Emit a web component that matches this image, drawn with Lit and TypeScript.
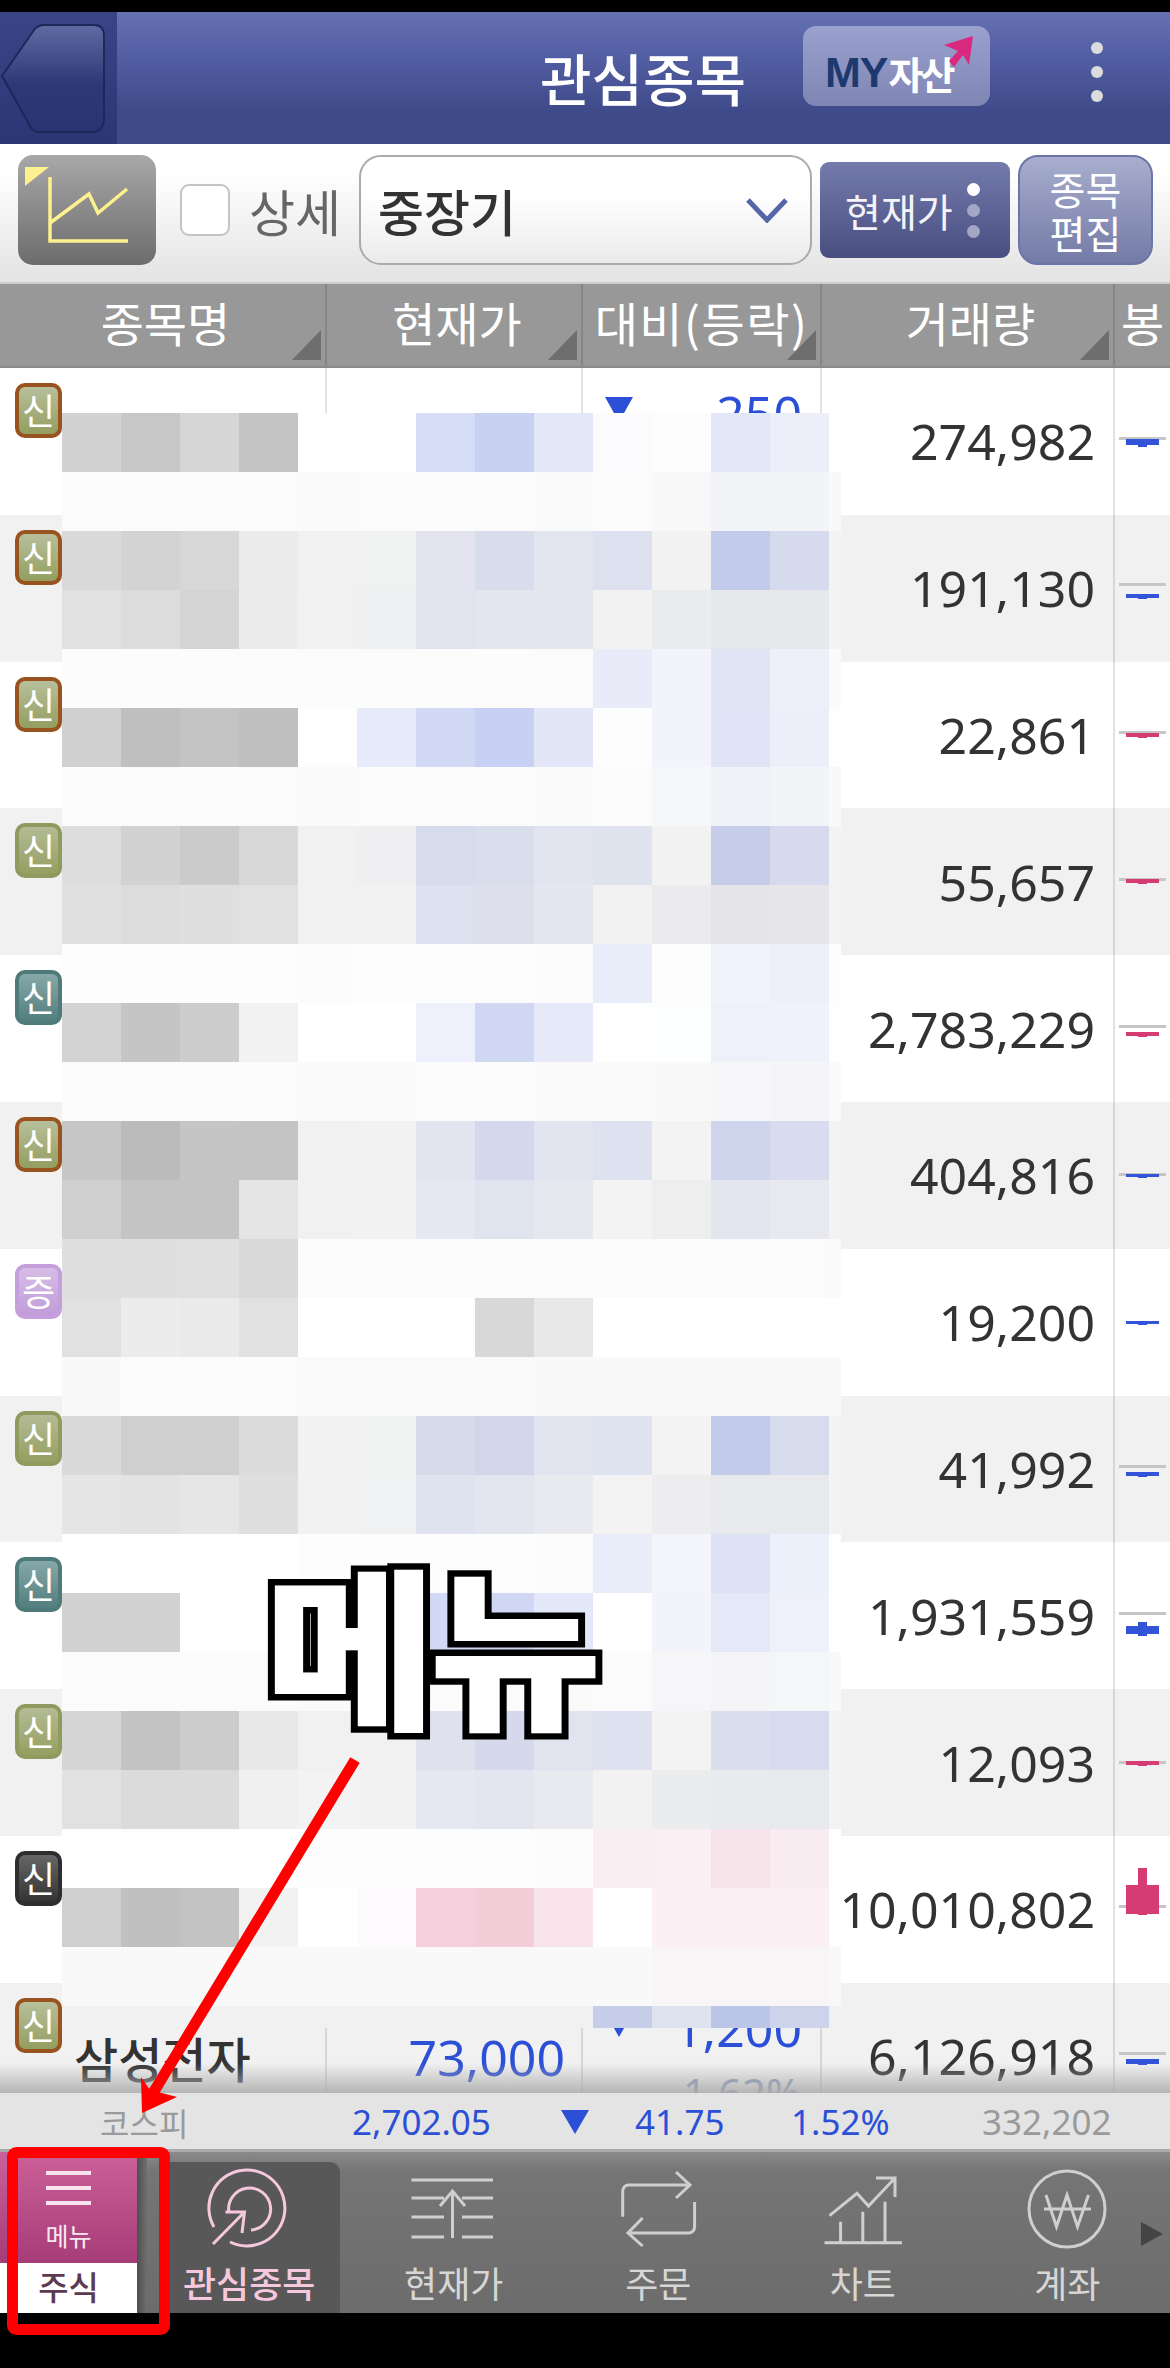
import { LitElement, html, css, svg } from "lit";
import { customElement } from "lit/decorators.js";

const MOSAIC = `d2 c7 d6 c4 ff ff d6ddf6 c9d1f3 e4e7f7 fbfbfe fefdfe e2e8f7 eceef9 ff
fb fb fb fb fa fb fb fb fa fb f8 f2f3f7 f3f4f8 f9
d9 d3 d7 eb f1 f0f2f1 e2e3ef d8ddec e3e6ef dde0ef f2 c2cbe9 d5daec f3
e1 dc d4 ec f1 eff0f2 e2e3ef e3e6ef e4e7ef f2 eaebee e7e8ec e7e8ec f3
fc fc fc fc fb fc fc fc fb e9ebf8 f3f4fb e0e5f6 edf0f9 fa
d0 bf c4 bf fe e8ebfa d2d9f5 c8d0f3 e3e6f7 fdfdfe f3f4fb dfe4f6 eceefa fe
fb fb fb fb fa fb fb fb fa fb f6f7f9 f1f2f7 f3f4f8 f9
dd d2 cb d7 f1 efeff1 d6dcec d8deec e2e4ef dfe3ee f2 c6cde9 d6daec f3
e0 dc df e1 f1 f1 dde0ee dedfec e5e7f0 f2 ebebee e5e5e9 e6e6ea f3
fd fd fd fd fc fd fd fd fc e9edf9 fd f1f3fc edf0f9 fd
d3 c5 cd f2 ff ff eef0fb d0d7f3 e6e9f8 fe fdfefe eef1fa eff2fa fe
fb fb fb fb fa fa fb fb fa fa f9 f7f6f9 f5f5f9 fa
c6 bb c5 c4 f1 f2 e2e4ef d3d8ed e2e4ef dee1ef f3 cfd5ed d9dcee f3
cf c4 c4 e4 f1 f2 e5e8f1 e0e4ef e6e8f0 f3 ee e3e6ee e8e9ee f3
df df e0 d9 fc fc fc fc fb fb fb fb fb fa
e1 ec ea e1 ff ff ff d8 e8 ff ff ff ff ff
f9 fb fb fb fa fa fa fa f9 f9 f9 f9 f9 f8
da cf cf db f2 f1f3f2 d6dbec d1d6eb e2e4ef dfe2ef f3 c2cbe9 d7dcec f3
e5 e3 e6 df f2 eff1f3 dfe3ef e3e6ef e9eaef f3 edecef e8e9ed e8e9ed f3
ff ff ff ff fd fd fd fd fc e9edf9 f4f5fb dde2f5 ecf0fa fe
d2 d2 ff ff ff ff d2d9f5 d0d7f5 e3e8f8 ff f3f4fb e5e8f7 eff1fa ff
fb fb fb fb fa fb fb fb fa fb f6f6f8 f5f5f8 f5f6f8 f9
d5 c3 cc e8 f1 f1 dfe1ee d5d9eb e1e3ee dee1ef f3 dadeed d8dbed f3
e1 db db f0 f3 f2 e5e8f0 e3e6ef e9eaef f2 ebecee e8eaed e8e9ed f3
fe fe fe fe fd fd fd fd fc f9eef2 faf0f4 f6e3ea f9ecf0 fe
cf c0 c3 f2 ff fdfbfd f3d0dc f3ced9 f8e4ea ff fcf0f4 fbeff3 fcf0f4 fe
f9 f9 f9 f9 f9 f9 f9 f9 f9 f9 f7f5f6 f7f5f6 f7f5f6 f8
f2 f2 f2 f2 f1 f2 f2 f2 f1 c5cde9 dfe3f0 bac5e8 ced3ec -`
  .split("\n")
  .map((r) => r.trim().split(" "));

const hex = (v: string) =>
  v === "-" ? "transparent" : v.length === 2 ? `#${v}${v}${v}` : `#${v}`;

type Row = {
  vol: string;
  badge: string;
  label: string;
  gray: number;
  color: string;
  top: number;
  h: number;
};
const BLUE = "#3353d8";
const PINK = "#d63c74";
const ROWS: Row[] = [
  { vol: "274,982", badge: "b-brown", label: "신", gray: 69, color: BLUE, top: 71, h: 6 },
  { vol: "191,130", badge: "b-brown", label: "신", gray: 68, color: BLUE, top: 79, h: 4 },
  { vol: "22,861", badge: "b-brown", label: "신", gray: 69, color: PINK, top: 71, h: 4 },
  { vol: "55,657", badge: "b-green", label: "신", gray: 70, color: PINK, top: 71, h: 4 },
  { vol: "2,783,229", badge: "b-teal", label: "신", gray: 70, color: PINK, top: 77, h: 4 },
  { vol: "404,816", badge: "b-brown", label: "신", gray: 71, color: BLUE, top: 72, h: 3 },
  { vol: "19,200", badge: "b-purple", label: "증", gray: -1, color: BLUE, top: 72, h: 3 },
  { vol: "41,992", badge: "b-green", label: "신", gray: 69, color: BLUE, top: 76, h: 4 },
  { vol: "1,931,559", badge: "b-teal", label: "신", gray: 70, color: BLUE, top: 84, h: 8 },
  { vol: "12,093", badge: "b-green", label: "신", gray: 72, color: PINK, top: 72, h: 4 },
  { vol: "10,010,802", badge: "b-black", label: "신", gray: 69, color: PINK, top: 49, h: 29 },
  { vol: "6,126,918", badge: "b-brown", label: "신", gray: 69, color: BLUE, top: 76, h: 5 },
];

const ICONS: Record<string, unknown> = {
  watch: svg`<path d="M15 62A38 38 0 1 1 31 77"/><path d="M30 48A21 21 0 1 1 52 65"/><path d="M14 79L45.5 47M26.5 47H45.5L43 68"/>`,
  price: svg`<path d="M7.5 15H89M7.5 33H40M58 33H89M7.5 52H40M58 52H89M7.5 72H40M58 72H89M48.5 73V26M36 41L48.5 26L61 41"/>`,
  order: svg`<path d="M14.7 51.7V26a6 6 0 0 1 6-6H82M68 7L82 20L68 33"/><path d="M86.6 37V62a6 6 0 0 1-6 6H20M34.6 53L20 68L34.6 81"/>`,
  chart: svg`<path d="M11.5 77.700H89M27.600 77.700V56.700M49.800 77.700V46.700M72 77.700V36.700M16.500 50.700L44 28.300L55.500 41L82 13M63 13H82V32"/>`,
  account: svg`<circle cx="50" cy="44" r="38"/><path d="M29 30L39.500 61.700L50 30L60.500 61.700L71.500 30M27 44H74"/>`,
};
const TABS = [
  { icon: "watch", label: "관심종목", active: true },
  { icon: "price", label: "현재가", active: false },
  { icon: "order", label: "주문", active: false },
  { icon: "chart", label: "차트", active: false },
  { icon: "account", label: "계좌", active: false },
];

@customElement("app-root")
export class AppRoot extends LitElement {
  static styles = css`
    :host {
      display: block;
      position: relative;
      width: 1170px;
      height: 2368px;
      overflow: hidden;
      background: #000;
      padding-top: 12px;
      box-sizing: border-box;
      font-family: "Noto Sans", "Noto Sans CJK KR", sans-serif;
      color: #333;
    }
    .kr {
      font-family: "Noto Sans CJK KR", "Noto Sans", sans-serif;
    }
    .appbar {
      height: 132px;
      display: flex;
      background: linear-gradient(#6671b2, #525ea2 35%, #3f4a8a 75%, #3f4a88);
    }
    .back {
      width: 117px;
      flex: none;
      display: block;
      background: linear-gradient(#3a4588, #2c3675);
    }
    .title {
      width: 286px;
      margin-left: 383px;
      margin-right: 5px;
      text-align: center;
      color: #fff;
      font-size: 56px;
      line-height: 132px;
      font-weight: 500;
      white-space: nowrap;
      height: 132px;
      transform: translateY(-1px);
    }
    .my {
      position: relative;
      margin-top: 14px;
      margin-left: 12px;
      width: 187px;
      height: 80px;
      flex: none;
      border-radius: 13px;
      background: linear-gradient(#9aa1cf, #7f86b4);
      display: flex;
      align-items: center;
      padding: 13px 0 0 22px;
      box-sizing: border-box;
      font-weight: 700;
    }
    .my b {
      font-family: "Liberation Sans", sans-serif;
      font-size: 43px;
      color: #1d3a70;
      letter-spacing: -1px;
    }
    .my span {
      font-size: 38px;
      color: #fff;
      letter-spacing: -3px;
      margin-left: 1px;
    }
    .my svg {
      position: absolute;
      left: 140px;
      top: 8px;
    }
    .dots {
      display: flex;
      flex-direction: column;
      gap: 12px;
      margin: 30px 0 0 101px;
    }
    .dots i {
      width: 12px;
      height: 12px;
      border-radius: 50%;
      background: #dcdcdc;
      display: block;
    }
    .toolbar {
      height: 140px;
      box-sizing: border-box;
      border-bottom: 2px solid #cdcdcd;
      background: linear-gradient(#fff, #fff 20%, #e3e3e3);
      display: flex;
      padding: 11px 18px 0;
    }
    .chartbtn {
      width: 138px;
      height: 110px;
      border-radius: 15px;
      background: linear-gradient(#a8a8a8, #6c6c6c);
      flex: none;
      display: block;
    }
    .check {
      width: 50px;
      height: 52px;
      box-sizing: border-box;
      border: 2px solid #c4c4c4;
      border-radius: 9px;
      background: #fff;
      margin: 29px 0 0 24px;
      flex: none;
    }
    .lbl {
      font-size: 50px;
      color: #666;
      line-height: 110px;
      margin-left: 19px;
      width: 92px;
      flex: none;
      white-space: nowrap;
    }
    .select {
      width: 453px;
      height: 110px;
      margin-left: 18px;
      flex: none;
      box-sizing: border-box;
      border: 2px solid #ababab;
      border-radius: 22px;
      background: linear-gradient(#fff, #fff 35%, #ebebeb);
      display: flex;
      align-items: center;
      justify-content: space-between;
      padding: 0 22px 0 17px;
      font-size: 50px;
      font-weight: 500;
      color: #333;
    }
    .cur {
      width: 190px;
      height: 96px;
      margin: 7px 0 0 8px;
      flex: none;
      border-radius: 9px;
      background: linear-gradient(#747bad, #484e7f);
      display: flex;
      align-items: center;
      padding-left: 25px;
      box-sizing: border-box;
      color: #f4f4f8;
      font-size: 39px;
      gap: 14px;
      white-space: nowrap;
    }
    .cur div {
      display: flex;
      flex-direction: column;
      gap: 8px;
    }
    .cur i {
      display: block;
      width: 13px;
      height: 13px;
      border-radius: 50%;
      background: #a3a6c4;
    }
    .cur i:first-child {
      background: #fff;
    }
    .edit {
      width: 135px;
      height: 110px;
      margin-left: 8px;
      flex: none;
      box-sizing: border-box;
      border: 2px solid #6c74a8;
      border-radius: 20px;
      background: linear-gradient(#a8aecd, #737aa6);
      color: #fff;
      font-size: 39px;
      line-height: 44px;
      text-align: center;
      padding-top: 9px;
      white-space: nowrap;
    }
    .head,
    .row {
      display: grid;
      grid-template-columns: 325px 256px 239px 293px 57px;
    }
    .head {
      height: 84px;
      box-sizing: border-box;
      background: #989898;
      border-bottom: 2px solid #8a8a8a;
      color: #fff;
      font-size: 47px;
    }
    .head > div {
      position: relative;
      text-align: center;
      line-height: 76px;
      white-space: nowrap;
      border-left: 2px solid #858585;
      box-sizing: border-box;
    }
    .head > div:first-child {
      border-left: none;
    }
    .head .nm {
      padding-left: 6px;
    }
    .head > div.sort::after {
      content: "";
      position: absolute;
      right: 4px;
      bottom: 6px;
      width: 29px;
      height: 30px;
      background: #6e6e6e;
      clip-path: polygon(100% 0, 100% 100%, 0 100%);
    }
    .head .wide {
      letter-spacing: 1.5px;
      padding-left: 0;
    }
    .body {
      height: 1725px;
      overflow: hidden;
      position: relative;
    }
    .row {
      height: 146.8px;
      background: #fff;
      overflow: hidden;
    }
    .row.alt {
      background: #f1f1f1;
    }
    .row > div {
      border-left: 2px solid #e2e2e2;
      box-sizing: border-box;
      position: relative;
    }
    .row.alt > div {
      border-left-color: #d6d6d6;
    }
    .row > div:first-child {
      border-left: none;
    }
    .badge {
      position: absolute;
      left: 15px;
      top: 15px;
      width: 47px;
      height: 55px;
      box-sizing: border-box;
      border-radius: 10px;
      border: 4px solid;
      color: #fff;
      font-size: 36px;
      line-height: 44px;
      text-align: center;
    }
    .b-brown {
      border-color: #98531f;
      background: linear-gradient(#b8bf9c, #939e5f);
    }
    .b-green {
      border-color: #8e9a5e;
      background: linear-gradient(#b4bb96, #949f60);
    }
    .b-teal {
      border-color: #4f7a7a;
      background: linear-gradient(#86a8a8, #527e7e);
    }
    .b-purple {
      border-color: #c49fdc;
      background: linear-gradient(#d6bde6, #c19cda);
    }
    .b-black {
      border-color: #2e2e2e;
      background: linear-gradient(#666, #333);
    }
    .name {
      position: absolute;
      left: 74px;
      top: 43px;
      font-size: 48px;
      font-weight: 500;
      line-height: 62px;
      white-space: nowrap;
    }
    .price {
      position: absolute;
      right: 16px;
      top: 40px;
      font-size: 50px;
      line-height: 68px;
      color: #2b4fd6;
    }
    .chg {
      position: absolute;
      right: 18px;
      top: 11px;
      font-size: 50px;
      line-height: 68px;
      color: #2b4fd6;
    }
    .tri {
      position: absolute;
      left: 22px;
      top: 29px;
      width: 0;
      height: 0;
      border-left: 14px solid transparent;
      border-right: 14px solid transparent;
      border-top: 25px solid #2b4fd6;
    }
    .pct {
      position: absolute;
      right: 19px;
      top: 82px;
      font-size: 42px;
      line-height: 56px;
      color: #8899c2;
    }
    .vol {
      display: flex;
      align-items: center;
      justify-content: flex-end;
      padding-right: 18px;
      font-size: 50px;
      white-space: nowrap;
    }
    .candle {
      display: block;
    }
    .fade {
      position: absolute;
      left: 0;
      right: 0;
      bottom: 0;
      height: 30px;
      background: linear-gradient(rgba(170, 170, 170, 0), rgba(170, 170, 170, 0.85));
    }
    .mosaic {
      position: absolute;
      left: 62px;
      top: 413px;
      display: grid;
      grid-template-columns: repeat(13, 59px) 12px;
      grid-template-rows: repeat(27, 59px) 22px;
    }
    .index {
      height: 59px;
      box-sizing: border-box;
      background: #e4e4e4;
      border-bottom: 3px solid #ababab;
      position: relative;
      font-size: 35px;
      line-height: 58px;
      color: #2b4fd6;
    }
    .index span {
      position: absolute;
      top: 0;
      white-space: nowrap;
    }
    .index .g {
      color: #9a9a9a;
    }
    .index .k {
      font-size: 32px;
    }
    .index .t {
      position: absolute;
      left: 561px;
      top: 17px;
      width: 0;
      height: 0;
      border-left: 14px solid transparent;
      border-right: 14px solid transparent;
      border-top: 24px solid #2b4fd6;
    }
    .nav {
      height: 161px;
      display: flex;
      position: relative;
      background: linear-gradient(#8a8a8a, #757575 12%, #6c6c6c);
      overflow: hidden;
    }
    .menu {
      width: 137px;
      flex: none;
      display: flex;
      flex-direction: column;
      font-size: 25px;
    }
    .menu .top {
      height: 111px;
      background: linear-gradient(#cc6199, #a63c78);
      display: flex;
      flex-direction: column;
      align-items: center;
      color: #f9e8f2;
      padding: 19px 0 0 0;
      box-sizing: border-box;
    }
    .menu .bars {
      width: 45px;
      height: 34px;
      box-sizing: border-box;
      border-top: 4px solid #f9e3ef;
      border-bottom: 4px solid #f9e3ef;
      position: relative;
      margin-bottom: 15px;
    }
    .menu .bars::after {
      content: "";
      position: absolute;
      left: 0;
      right: 0;
      top: 11px;
      height: 4px;
      background: #f9e3ef;
    }
    .menu .top span {
      line-height: 30px;
    }
    .menu .bot {
      flex: 1;
      background: #fff;
      text-align: center;
      font-size: 33px;
      line-height: 47px;
      color: #5c3a52;
      font-weight: 500;
    }
    .shadow {
      width: 10px;
      flex: none;
      background: linear-gradient(90deg, #4f4f4f, #6f6f6f);
    }
    .tab {
      width: 204.5px;
      flex: none;
      box-sizing: border-box;
      padding-top: 13px;
      text-align: center;
      color: #d6d6d6;
      font-size: 36px;
      line-height: 50px;
      position: relative;
    }
    .tab svg {
      display: block;
      margin: 0 auto 4px;
      fill: none;
      stroke: #cfcfcf;
      stroke-width: 3;
    }
    .tab.on {
      color: #f5c8de;
      font-weight: 500;
    }
    .tab.on svg {
      stroke: #f5c8de;
    }
    .tab.on::before {
      content: "";
      position: absolute;
      left: 12px;
      width: 181px;
      top: 10px;
      bottom: 0;
      border-radius: 10px 10px 0 0;
      background: #585858;
    }
    .tab > * {
      position: relative;
    }
    .more {
      position: absolute;
      left: 1141px;
      top: 70px;
      width: 0;
      height: 0;
      border-top: 12px solid transparent;
      border-bottom: 12px solid transparent;
      border-left: 22px solid #444;
    }
    .note {
      position: absolute;
      left: 264px;
      top: 1523px;
      font-size: 188px;
      line-height: 250px;
      font-weight: 900;
      color: #fff;
      -webkit-text-stroke: 14px #000;
      paint-order: stroke fill;
      white-space: nowrap;
      letter-spacing: -8px;
      transform: scaleY(0.92);
      transform-origin: 0 38px;
    }
    .marks {
      position: absolute;
      left: 0;
      top: 0;
      display: block;
    }
  `;

  private candle(r: Row, i: number) {
    const wickTop = i === 10 ? 32 : i === 0 ? 71 : i === 8 ? 80 : r.top;
    const wickEnd = i === 10 ? 79 : i === 0 ? 79 : i === 8 ? 94 : r.top + r.h + 1;
    return html`<svg class="candle" width="55" height="146" viewBox="0 0 55 146">
      ${r.gray >= 0 ? svg`<rect x="4" y=${r.gray} width="47" height="3" fill="#c6c6c6"/>` : ""}
      <rect x="23" y=${wickTop} width="9" height=${wickEnd - wickTop} fill=${r.color} />
      <rect x="11" y=${r.top} width="33" height=${r.h} fill=${r.color} />
    </svg>`;
  }

  render() {
    return html`
      <div class="appbar">
        <svg class="back" width="117" height="132" viewBox="0 0 117 132">
          <defs>
            <linearGradient id="bk" x1="0" y1="0" x2="0" y2="1">
              <stop offset="0" stop-color="#5f6ba2" />
              <stop offset="0.55" stop-color="#2d3877" />
              <stop offset="1" stop-color="#2a3473" />
            </linearGradient>
          </defs>
          <path
            d="M2 64L34 18Q38 13 44 13H94Q104 13 104 24V105Q104 120 92 120H40Q34 120 31 116Z"
            fill="url(#bk)"
            stroke="#1e2759"
            stroke-width="2"
          />
        </svg>
        <div class="title kr">관심종목</div>
        <div class="my kr">
          <b>MY</b><span>자산</span>
          <svg width="36" height="34" viewBox="0 0 36 34">
            <path d="M1 11L30 2L26 31L20 21L11 33L6 27L15 17Z" fill="#d9287f" />
          </svg>
        </div>
        <div class="dots"><i></i><i></i><i></i></div>
      </div>
      <div class="toolbar kr">
        <svg class="chartbtn" width="138" height="110" viewBox="0 0 138 110">
          <path d="M7 12H31L7 31Z" fill="#fdf08e" />
          <path
            d="M32 22V86H110M32 68L71 39L80 58L109 34"
            fill="none"
            stroke="#fdf08e"
            stroke-width="3.500"
          />
        </svg>
        <div class="check"></div>
        <div class="lbl">상세</div>
        <div class="select">
          <span>중장기</span>
          <svg width="42" height="26" viewBox="0 0 42 26">
            <path d="M2 3L21 23L40 3" fill="none" stroke="#5566a8" stroke-width="5" />
          </svg>
        </div>
        <div class="cur">
          <span>현재가</span>
          <div><i></i><i></i><i></i></div>
        </div>
        <div class="edit">종목<br />편집</div>
      </div>
      <div class="head kr">
        <div class="sort nm">종목명</div>
        <div class="sort nm">현재가</div>
        <div class="sort wide">대비(등락)</div>
        <div class="sort nm">거래량</div>
        <div>봉</div>
      </div>
      <div class="body">
        ${ROWS.map(
          (r, i) => html`<div class="row ${i % 2 ? "alt" : ""}">
            <div>
              <span class="badge kr ${r.badge}">${r.label}</span>
              ${i === 11 ? html`<span class="name kr">삼성전자</span>` : ""}
            </div>
            <div>${i === 11 ? html`<span class="price">73,000</span>` : ""}</div>
            <div>
              ${i === 0 || i === 11
                ? html`<i class="tri"></i><span class="chg">${i === 0 ? "250" : "1,200"}</span>`
                : ""}
              ${i === 11 ? html`<span class="pct">1.62%</span>` : ""}
            </div>
            <div class="vol">${r.vol}</div>
            <div>${this.candle(r, i)}</div>
          </div>`
        )}
        <div class="fade"></div>
      </div>
      <div class="index">
        <span class="g k kr" style="left:100px">코스피</span>
        <span style="left:352px">2,702.05</span>
        <i class="t"></i>
        <span style="left:635px">41.75</span>
        <span style="left:791px">1.52%</span>
        <span class="g" style="left:982px">332,202</span>
      </div>
      <div class="nav kr">
        <div class="menu">
          <div class="top"><div class="bars"></div><span>메뉴</span></div>
          <div class="bot">주식</div>
        </div>
        <div class="shadow"></div>
        ${TABS.map(
          (t) => html`<div class="tab ${t.active ? "on" : ""}">
            <svg width="100" height="88" viewBox="0 0 100 88">${ICONS[t.icon]}</svg>
            <div>${t.label}</div>
          </div>`
        )}
        <i class="more"></i>
      </div>
      <div class="mosaic">
        ${MOSAIC.flatMap((row) =>
          row.map((c) => html`<div style="background:${hex(c)}"></div>`)
        )}
      </div>
      <div class="note kr">메뉴</div>
      <svg class="marks" width="1170" height="2368" viewBox="0 0 1170 2368">
        <rect x="12.500" y="2152.500" width="152" height="177" rx="4" fill="none" stroke="#f00" stroke-width="11" />
        <path d="M355 1760L150 2098" stroke="#f00" stroke-width="11" fill="none" />
        <path d="M141 2077L142 2113L177 2097L150 2090Z" fill="#f00" />
      </svg>
    `;
  }
}
